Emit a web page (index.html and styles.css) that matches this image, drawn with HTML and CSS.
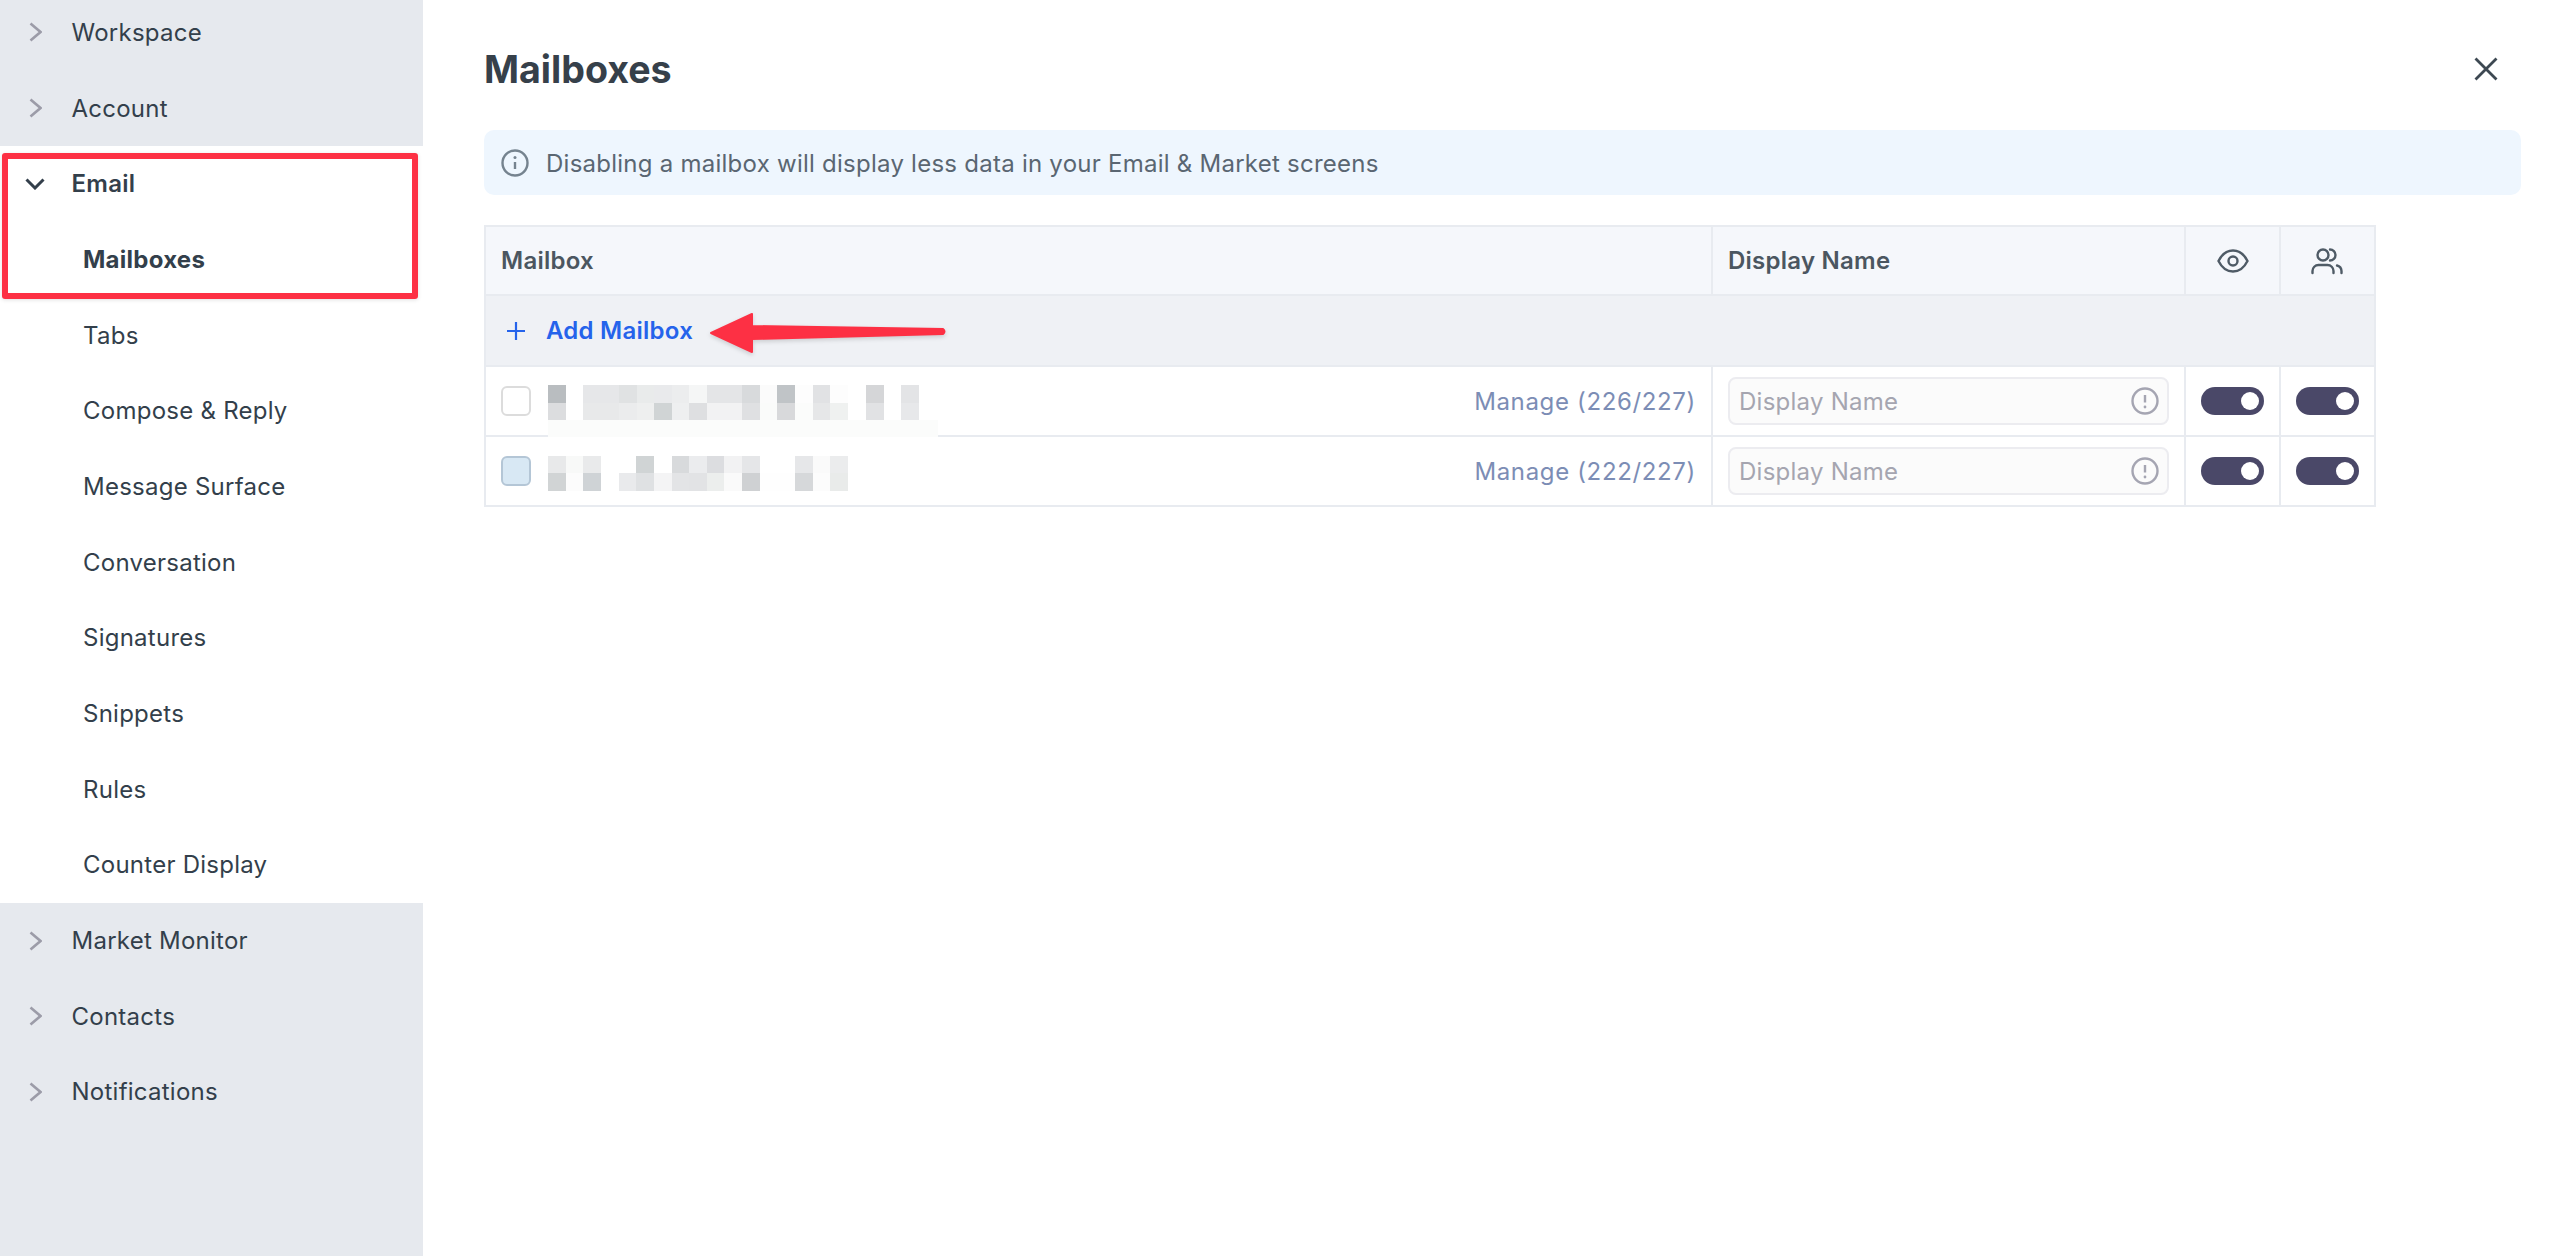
FILE: index.html

```html
<!DOCTYPE html>
<html lang="en">
<head>
    <meta charset="UTF-8">
    <title>Mailboxes</title>
    <link rel="stylesheet" href="styles.css">
</head>
<body>
    <div class="app">
        <nav class="sidebar">
            <div class="group">
                <div class="nav-row"><svg class="chev" viewBox="0 0 13 20"><path d="M1.500 1.500l10 8.500-10 8.500"/></svg>Workspace</div>
                <div class="nav-row"><svg class="chev" viewBox="0 0 13 20"><path d="M1.500 1.500l10 8.500-10 8.500"/></svg>Account</div>
            </div>
            <div class="group group-open">
                <div class="nav-row nav-current"><svg class="chev-down" viewBox="0 0 20 12"><path d="M1.500 1.500l8.500 8.500 8.500-8.500"/></svg>Email</div>
                <div class="nav-sub nav-sub-active">Mailboxes</div>
                <div class="nav-sub">Tabs</div>
                <div class="nav-sub">Compose &amp; Reply</div>
                <div class="nav-sub">Message Surface</div>
                <div class="nav-sub">Conversation</div>
                <div class="nav-sub">Signatures</div>
                <div class="nav-sub">Snippets</div>
                <div class="nav-sub">Rules</div>
                <div class="nav-sub">Counter Display</div>
            </div>
            <div class="group group-fill">
                <div class="nav-row"><svg class="chev" viewBox="0 0 13 20"><path d="M1.500 1.500l10 8.500-10 8.500"/></svg>Market Monitor</div>
                <div class="nav-row"><svg class="chev" viewBox="0 0 13 20"><path d="M1.500 1.500l10 8.500-10 8.500"/></svg>Contacts</div>
                <div class="nav-row"><svg class="chev" viewBox="0 0 13 20"><path d="M1.500 1.500l10 8.500-10 8.500"/></svg>Notifications</div>
            </div>
        </nav>

        <main class="main">
            <div class="main-head">
                <h1>Mailboxes</h1>
                <svg class="close" viewBox="0 0 24 24"><path d="M1.500 1.500l21 21M22.500 1.500l-21 21"/></svg>
            </div>

            <div class="banner">
                <svg class="ico-info" viewBox="0 0 28 28">
                    <circle cx="14" cy="14" r="12.500"/>
                    <path d="M14 13v7"/>
                    <circle class="dot" cx="14" cy="8.500" r="1.500"/>
                </svg>
                Disabling a mailbox will display less data in your Email &amp; Market screens
            </div>

            <div class="table">
                <div class="row row-head">
                    <div class="cell">Mailbox</div>
                    <div class="cell">Display Name</div>
                    <div class="cell cell-center">
                        <svg class="ico-head" viewBox="0 0 32 32">
                            <path d="M1.500 16C5 9 10 5.500 16 5.500S27 9 30.500 16C27 23 22 26.500 16 26.500S5 23 1.500 16z"/>
                            <circle cx="16" cy="16" r="4.500"/>
                        </svg>
                    </div>
                    <div class="cell cell-center">
                        <svg class="ico-head ico-people" viewBox="0 0 32 32">
                            <circle cx="12" cy="10" r="5.500"/>
                            <path d="M1.500 28v-2a6 6 0 0 1 6-6h9a6 6 0 0 1 6 6v2"/>
                            <path d="M19 4.500a5.500 5.500 0 0 1 0 11"/>
                            <path d="M26 20.500a6 6 0 0 1 4.500 5.500v2"/>
                        </svg>
                    </div>
                </div>

                <div class="row-add">
                    <svg class="ico-plus" viewBox="0 0 20 20"><path d="M10 1v18M1 10h18"/></svg>
                    Add Mailbox
                </div>

                <div class="row">
                    <div class="cell cell-mailbox">
                        <span class="check"></span>
                        <a class="manage">Manage (226/227)</a>
                    </div>
                    <div class="cell">
                        <div class="name-input">
                            <input type="text" placeholder="Display Name">
                            <svg class="ico-alert" viewBox="0 0 28 28">
                                <circle cx="14" cy="14" r="12.500"/>
                                <path d="M14 8v7.500"/>
                                <circle class="dot" cx="14" cy="20" r="1.400"/>
                            </svg>
                        </div>
                    </div>
                    <div class="cell cell-center"><span class="toggle"></span></div>
                    <div class="cell cell-center"><span class="toggle"></span></div>
                </div>

                <div class="row">
                    <div class="cell cell-mailbox">
                        <span class="check check-on"></span>
                        <a class="manage">Manage (222/227)</a>
                    </div>
                    <div class="cell">
                        <div class="name-input">
                            <input type="text" placeholder="Display Name">
                            <svg class="ico-alert" viewBox="0 0 28 28">
                                <circle cx="14" cy="14" r="12.500"/>
                                <path d="M14 8v7.500"/>
                                <circle class="dot" cx="14" cy="20" r="1.400"/>
                            </svg>
                        </div>
                    </div>
                    <div class="cell cell-center"><span class="toggle"></span></div>
                    <div class="cell cell-center"><span class="toggle"></span></div>
                </div>
            </div>
        </main>
    </div>

    <!-- blurred addresses -->
    <svg class="mosaic" width="400" height="125" viewBox="0 0 400 125" shape-rendering="crispEdges">
        <rect x="0" y="35" width="390" height="17" fill="#fbfcfb"/>
        <g>
            <rect x="0" y="0" width="18" height="18" fill="#b9bdc0"/>
            <rect x="35" y="0" width="36" height="18" fill="#e6e7e9"/>
            <rect x="71" y="0" width="18" height="18" fill="#e0e2e3"/>
            <rect x="89" y="0" width="18" height="18" fill="#e9ebeb"/>
            <rect x="106" y="0" width="18" height="18" fill="#e9eaec"/>
            <rect x="124" y="0" width="18" height="18" fill="#ecedee"/>
            <rect x="141" y="0" width="18" height="18" fill="#f5f6f6"/>
            <rect x="159" y="0" width="36" height="18" fill="#e4e5e7"/>
            <rect x="194" y="0" width="18" height="18" fill="#d8dadc"/>
            <rect x="212" y="0" width="18" height="18" fill="#fbfbfb"/>
            <rect x="229" y="0" width="18" height="18" fill="#c0c4c7"/>
            <rect x="247" y="0" width="18" height="18" fill="#fdfdfd"/>
            <rect x="265" y="0" width="18" height="18" fill="#e1e2e4"/>
            <rect x="282" y="0" width="18" height="18" fill="#fdfdfd"/>
            <rect x="318" y="0" width="18" height="18" fill="#d5d6d8"/>
            <rect x="353" y="0" width="18" height="18" fill="#e3e4e6"/>
        </g>
        <g>
            <rect x="0" y="18" width="18" height="17" fill="#dcdddf"/>
            <rect x="35" y="18" width="36" height="17" fill="#e8e9ea"/>
            <rect x="71" y="18" width="18" height="17" fill="#ebeced"/>
            <rect x="89" y="18" width="18" height="17" fill="#eeefef"/>
            <rect x="106" y="18" width="18" height="17" fill="#d0d4d5"/>
            <rect x="124" y="18" width="18" height="17" fill="#eeeff0"/>
            <rect x="141" y="18" width="18" height="17" fill="#dedfe1"/>
            <rect x="159" y="18" width="36" height="17" fill="#f2f2f3"/>
            <rect x="194" y="18" width="18" height="17" fill="#dfe0e2"/>
            <rect x="212" y="18" width="18" height="17" fill="#fafbfa"/>
            <rect x="229" y="18" width="18" height="17" fill="#d8d9db"/>
            <rect x="247" y="18" width="18" height="17" fill="#fbfcfb"/>
            <rect x="265" y="18" width="18" height="17" fill="#e6e7e8"/>
            <rect x="282" y="18" width="18" height="17" fill="#eff1f0"/>
            <rect x="318" y="18" width="18" height="17" fill="#e1e2e4"/>
            <rect x="353" y="18" width="18" height="17" fill="#e7e8ea"/>
        </g>
        <g>
            <rect x="0" y="71" width="18" height="17" fill="#e8e9ea"/>
            <rect x="18" y="71" width="17" height="17" fill="#f8f9f8"/>
            <rect x="35" y="71" width="18" height="17" fill="#e9eaeb"/>
            <rect x="88" y="71" width="18" height="17" fill="#d0d4d5"/>
            <rect x="124" y="71" width="18" height="17" fill="#d8dadc"/>
            <rect x="141" y="71" width="18" height="17" fill="#ebecee"/>
            <rect x="159" y="71" width="18" height="17" fill="#dcdde0"/>
            <rect x="176" y="71" width="18" height="17" fill="#f2f2f3"/>
            <rect x="194" y="71" width="18" height="17" fill="#e5e6e8"/>
            <rect x="247" y="71" width="18" height="17" fill="#e6e7e9"/>
            <rect x="265" y="71" width="18" height="17" fill="#fafafa"/>
            <rect x="282" y="71" width="18" height="17" fill="#ebeced"/>
        </g>
        <g>
            <rect x="0" y="88" width="18" height="18" fill="#d1d4d5"/>
            <rect x="18" y="88" width="17" height="18" fill="#fcfcfc"/>
            <rect x="35" y="88" width="18" height="18" fill="#cfd3d6"/>
            <rect x="71" y="88" width="18" height="18" fill="#e9eaec"/>
            <rect x="88" y="88" width="18" height="18" fill="#dfe1e3"/>
            <rect x="106" y="88" width="18" height="18" fill="#f4f4f5"/>
            <rect x="124" y="88" width="18" height="18" fill="#e3e4e6"/>
            <rect x="141" y="88" width="18" height="18" fill="#e2e3e5"/>
            <rect x="159" y="88" width="18" height="18" fill="#eceeed"/>
            <rect x="176" y="88" width="18" height="18" fill="#fafafa"/>
            <rect x="194" y="88" width="18" height="18" fill="#cfd1d3"/>
            <rect x="212" y="88" width="36" height="18" fill="#fefefe"/>
            <rect x="247" y="88" width="18" height="18" fill="#d6d8da"/>
            <rect x="265" y="88" width="18" height="18" fill="#fcfcfc"/>
            <rect x="282" y="88" width="18" height="18" fill="#e9ebea"/>
        </g>
    </svg>

    <!-- annotations -->
    <div class="note-box"></div>
    <svg class="note-arrow" width="250" height="50" viewBox="0 0 250 50">
        <path d="M3 21L44 2V14L235 17Q238 19.500 235 22L44 27V40z"/>
    </svg>
</body>
</html>
```

FILE: styles.css

```css
html, body {
    margin: 0;
    padding: 0;
    height: 100%;
    overflow: hidden;
}
body {
    position: relative;
    font-family: Inter, "Noto Sans", sans-serif;
    font-size: 24px;
    letter-spacing: .25px;
    color: #333f4b;
    background: #fff;
}
.app {
    display: flex;
    height: 100%;
}

/* sidebar */
.sidebar {
    width: 423px;
    flex: none;
    display: flex;
    flex-direction: column;
    margin-top: -5.5px;
    background: #e6e9ee;
}
.group-open {
    background: #fff;
}
.group-fill {
    flex: 1;
}
.nav-row {
    height: 75.7px;
    display: flex;
    align-items: center;
    padding-left: 29px;
}
.nav-sub {
    height: 75.7px;
    display: flex;
    align-items: center;
    padding-left: 83px;
}
.nav-current {
    font-weight: 600;
    padding-left: 25px;
}
.nav-sub-active {
    font-weight: 700;
}
.chev {
    width: 13px;
    height: 20px;
    margin-right: 29.5px;
    fill: none;
    stroke: #9c9ca8;
    stroke-width: 2.6;
}
.chev-down {
    width: 20px;
    height: 12px;
    margin-right: 26.5px;
    fill: none;
    stroke: #333f4b;
    stroke-width: 3;
}

/* main panel */
.main {
    flex: 1;
    padding: 0 39px 0 61px;
}
.main-head {
    height: 122px;
    padding-top: 8px;
    display: flex;
    align-items: center;
    justify-content: space-between;
    padding-right: 23px;
}
h1 {
    margin: 0;
    font-size: 37.6px;
    font-weight: 700;
    letter-spacing: 0;
    color: #36404a;
}
.close {
    width: 24px;
    height: 24px;
    fill: none;
    stroke: #3d4852;
    stroke-width: 2.800;
}
.banner {
    height: 65px;
    box-sizing: border-box;
    padding-top: 1px;
    display: flex;
    align-items: center;
    gap: 17px;
    padding-left: 17px;
    margin-bottom: 30px;
    background: #eef6fe;
    border-radius: 10px;
    color: #5a6672;
}
.ico-info {
    width: 28px;
    height: 28px;
    fill: none;
    stroke: #75838f;
    stroke-width: 2.400;
}
.dot {
    fill: currentColor;
    stroke: none;
}
.ico-info .dot {
    fill: #75838f;
}

/* table */
.table {
    width: 1892px;
    border: solid #e8ebf0;
    border-width: 2px 2px 0 2px;
    box-sizing: border-box;
}
.row {
    display: grid;
    grid-template-columns: 1227px 473px 95px 93px;
    height: 70px;
    border-bottom: 2px solid #e8ebf0;
    box-sizing: border-box;
}
.row-head {
    height: 69px;
    background: #f5f7fb;
    font-weight: 600;
    color: #4b5660;
}
.cell {
    display: flex;
    align-items: center;
    padding: 0 15px;
    border-right: 2px solid #e8ebf0;
    min-width: 0;
}
.cell:last-child {
    border-right: none;
}
.cell-center {
    justify-content: center;
    padding: 0;
}
.cell-mailbox {
    justify-content: space-between;
}
.ico-head {
    width: 32px;
    height: 32px;
    fill: none;
    stroke: #4f5b66;
    stroke-width: 2.400;
    stroke-linecap: round;
}
.ico-people {
    margin-right: 2px;
}
.row-add {
    height: 71px;
    display: flex;
    align-items: center;
    gap: 20px;
    padding-left: 20px;
    background: #eff1f5;
    border-bottom: 2px solid #e8ebf0;
    box-sizing: border-box;
    color: #2563eb;
    font-weight: 600;
}
.ico-plus {
    width: 20px;
    height: 20px;
    fill: none;
    stroke: #2563eb;
    stroke-width: 2.200;
}
.check {
    width: 30px;
    height: 30px;
    box-sizing: border-box;
    border: 2px solid #dcdcdc;
    border-radius: 6px;
    background: #fff;
}
.check-on {
    background: #d8e8f4;
    border-color: #b4c6d6;
}
.manage {
    color: #7c8db5;
    letter-spacing: .65px;
}
.name-input {
    flex: 1;
    height: 48px;
    box-sizing: border-box;
    display: flex;
    align-items: center;
    padding: 0 8px 0 9px;
    background: #fbfbfb;
    border: 2px solid #ececf0;
    border-radius: 8px;
}
.name-input input {
    flex: 1;
    min-width: 0;
    border: none;
    outline: none;
    padding: 0;
    background: none;
    font: inherit;
    letter-spacing: inherit;
}
.name-input input::placeholder {
    color: #a5a5b0;
    opacity: 1;
}
.ico-alert {
    width: 28px;
    height: 28px;
    color: #a5a5b2;
    fill: none;
    stroke: #a5a5b2;
    stroke-width: 2.400;
}
.toggle {
    width: 63px;
    height: 28px;
    border-radius: 14px;
    background: #4a4868;
    display: flex;
    align-items: center;
    justify-content: flex-end;
    padding-right: 5px;
    box-sizing: border-box;
}
.toggle::after {
    content: "";
    width: 18px;
    height: 18px;
    border-radius: 50%;
    background: #fff;
}

/* things lying over the page */
.mosaic {
    position: absolute;
    left: 548px;
    top: 385px;
}
.note-box {
    position: absolute;
    left: 2px;
    top: 153px;
    width: 416px;
    height: 146px;
    box-sizing: border-box;
    border: 6px solid #fd3044;
    border-radius: 3px;
    box-shadow: 0 1px 4px rgba(0, 0, 0, .12);
}
.note-arrow {
    position: absolute;
    left: 708px;
    top: 312px;
    filter: drop-shadow(0 2px 2px rgba(0, 0, 0, .15));
}
.note-arrow path {
    fill: #fd3044;
    stroke: #fd3044;
    stroke-width: 2;
    stroke-linejoin: round;
}
```
